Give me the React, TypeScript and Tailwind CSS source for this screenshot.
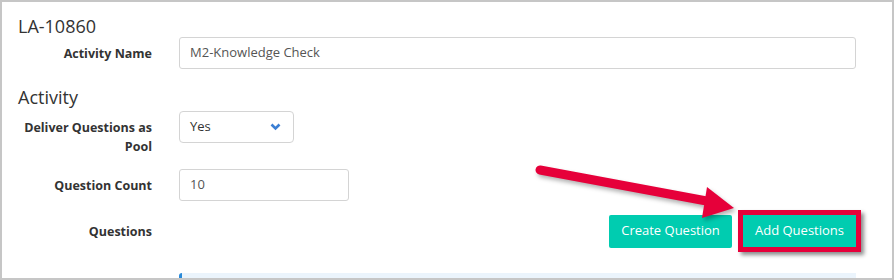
import React from 'react';

function Label({ children, className = '' }: { children: React.ReactNode; className?: string }) {
  return (
    <div className={`w-[134px] text-right text-[12.5px] font-bold leading-[19px] text-[#333] ${className}`}>
      {children}
    </div>
  );
}

export default function App() {
  return (
    <div
      className="relative w-[894px] h-[280px] overflow-hidden bg-white border-2 border-[#c6c6c6] pl-[16px] pr-[36px]"
      style={{ fontFamily: '"Open Sans", "Liberation Sans", sans-serif' }}
    >
      <h2 className="mt-[12px] text-[18px] leading-[24px] text-[#333] font-normal">LA-10860</h2>

      {/* Activity Name */}
      <div className="mt-[-1px] flex items-center gap-[27px]">
        <Label>Activity Name</Label>
        <div className="flex-1 h-[32px] border border-[#d4d4d4] rounded-[3px] px-[10px] flex items-center text-[13px] text-[#555]">
          M2-Knowledge Check
        </div>
      </div>

      <h2 className="mt-[16px] text-[18px] leading-[24px] text-[#333] font-normal">Activity</h2>

      {/* Deliver Questions as Pool */}
      <div className="mt-[2px] flex items-start gap-[27px]">
        <Label className="pt-[7px]">
          Deliver Questions as
          <br />
          Pool
        </Label>
        <div className="w-[115px] h-[32px] border border-[#d4d4d4] rounded-[4px] pl-[10px] pr-[12px] flex items-center justify-between text-[13px] text-[#333]">
          <span>Yes</span>
          <svg width="11" height="8" viewBox="0 0 11 8">
            <path d="M1.5 1.5 L5.5 5.5 L9.5 1.5" fill="none" stroke="#3b7fd4" strokeWidth="2.6" />
          </svg>
        </div>
      </div>

      {/* Question Count */}
      <div className="mt-[13px] flex items-center gap-[27px]">
        <Label>Question Count</Label>
        <div className="w-[170px] h-[32px] border border-[#d4d4d4] rounded-[3px] px-[10px] flex items-center text-[13px] text-[#555]">
          10
        </div>
      </div>

      {/* Questions */}
      <div className="mt-[9px] flex items-center gap-[27px]">
        <Label>Questions</Label>
        <div className="flex-1 flex items-center justify-end gap-[6px]">
          <button className="w-[123px] h-[33px] rounded-[2px] bg-[#00ccb0] text-white text-[13px]">
            Create Question
          </button>
          <div className="border-[5px] border-[#e6003a] shadow-[3px_3px_4px_rgba(0,0,0,0.45)] -mr-[5px]">
            <button className="w-[113px] h-[32px] bg-[#00ccb0] text-white text-[13px] block">
              Add Questions
            </button>
          </div>
        </div>
      </div>

      {/* bottom panel edge */}
      <div className="mt-[21px] ml-[161px] h-[10px] bg-[#ebf4fc] rounded-tl-[3px] border-l-[3px] border-[#2a8ad9]" />

      {/* annotation arrow */}
      <svg
        className="absolute left-0 top-0 pointer-events-none drop-shadow-[2px_3px_2px_rgba(0,0,0,0.3)]"
        width="894"
        height="280"
        viewBox="-2 -2 894 280"
      >
        <line x1="536" y1="166" x2="708" y2="198" stroke="#e6003a" strokeWidth="9" strokeLinecap="round" />
        <polygon points="703,183 698,214 730,204" fill="#e6003a" />
      </svg>
    </div>
  );
}
